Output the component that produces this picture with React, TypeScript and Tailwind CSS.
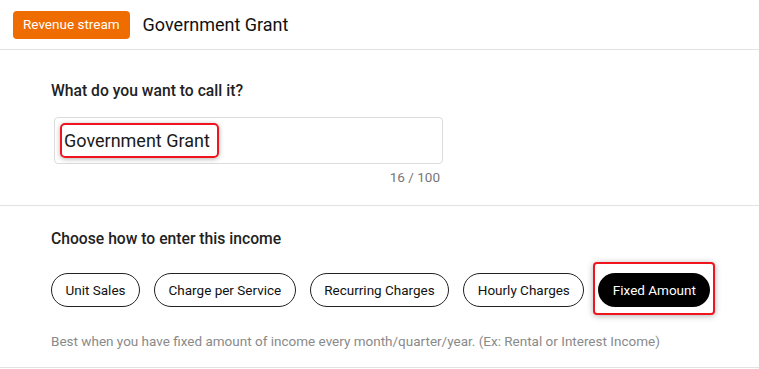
import React, { useState } from 'react'

const modes = ['Unit Sales', 'Charge per Service', 'Recurring Charges', 'Hourly Charges', 'Fixed Amount']

export default function App() {
  const [name, setName] = useState('Government Grant')
  const [mode, setMode] = useState('Fixed Amount')

  return (
    <div className="w-[759px] h-[369px] bg-white text-[#1f1f1f] overflow-hidden" style={{ fontFamily: 'Roboto, "Liberation Sans", sans-serif' }}>
      {/* header */}
      <div className="h-[50px] flex items-center gap-[13px] pl-[13px] border-b border-[#e2e2e2]">
        <span className="h-[28px] px-[10px] flex items-center rounded-[4px] bg-[#ef6c00] text-white text-[13.5px]">Revenue stream</span>
        <span className="text-[18px] text-[#111]">{name}</span>
      </div>

      {/* name */}
      <div className="h-[156px] pl-[51px] pt-[31px] border-b border-[#e2e2e2]">
        <div className="text-[15.7px] font-medium leading-[20px] text-[#222]">What do you want to call it?</div>
        <div className="mt-[16px] ml-[3px] w-[389px] h-[47px] rounded-[4px] border border-[#dcdcdc] flex items-center pl-[5px]">
          <span className="pl-[2px] pr-[7px] h-[35px] flex items-center rounded-[5px] border-2 border-[#f0141e] shadow-[0_1px_5px_rgba(0,0,0,0.3)] text-[18px] text-[#1a1a1a]">
            {name}
          </span>
        </div>
        <div className="w-[389px] text-right text-[13.5px] text-[#777] mt-[5px] leading-[16px]">{name.length} / 100</div>
      </div>

      {/* mode */}
      <div className="h-[162px] pl-[51px] pt-[23px] border-b border-[#e2e2e2]">
        <div className="text-[15.7px] font-medium leading-[20px] text-[#222]">Choose how to enter this income</div>
        <div className="mt-[24px] flex items-center gap-[14px]">
          {modes.map((m) =>
            m === mode ? (
              <span key={m} className="relative">
                <button onClick={() => setMode(m)} className="h-[34px] px-[14.5px] rounded-full bg-black text-white text-[13.5px]">{m}</button>
                <span className="absolute left-[-5px] right-[-5px] top-[-11px] bottom-[-8px] rounded-[4px] border-2 border-[#f0141e] shadow-[0_1px_6px_rgba(0,0,0,0.3)] pointer-events-none" />
              </span>
            ) : (
              <button key={m} onClick={() => setMode(m)} className="h-[34px] px-[13.5px] rounded-full border border-[#222] text-[13.5px] text-[#111]">{m}</button>
            )
          )}
        </div>
        <div className="mt-[24px] text-[13.5px] text-[#8a8a8a] leading-[20px]">
          Best when you have fixed amount of income every month/quarter/year. (Ex: Rental or Interest Income)
        </div>
      </div>
    </div>
  )
}
